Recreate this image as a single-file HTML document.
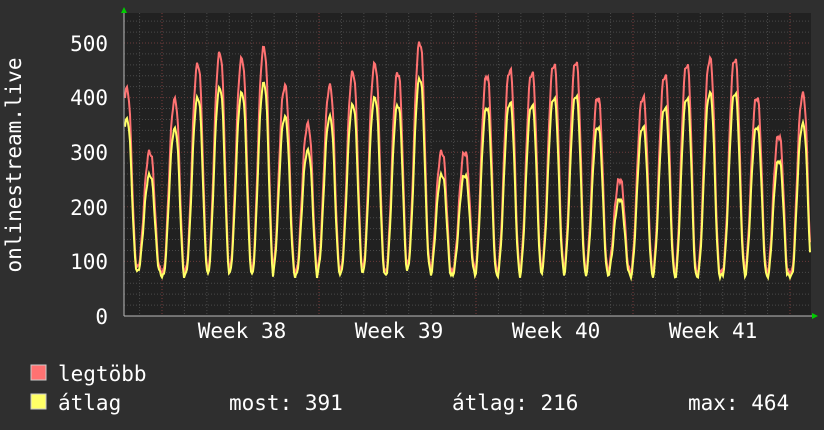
<!DOCTYPE html>
<html><head><meta charset="utf-8"><style>
html,body{margin:0;padding:0;background:#2f2f2f;width:824px;height:430px;overflow:hidden}
svg{display:block}
text{font-family:"DejaVu Sans Mono","Liberation Mono",monospace;fill:#fff;font-size:21px}
</style></head><body>
<svg id="g" width="824" height="430" xmlns="http://www.w3.org/2000/svg">
<rect width="824" height="430" fill="#2f2f2f"/>
<rect x="124" y="13" width="687" height="303" fill="#212121"/>
<g id="grid"></g>
<polyline id="red" fill="none" stroke="#ff7272" stroke-width="2"/>
<polyline id="yel" fill="none" stroke="#ffff66" stroke-width="2"/>
<line x1="124" y1="316" x2="814" y2="316" stroke="#bbb" stroke-width="1"/>
<line x1="124" y1="10" x2="124" y2="316" stroke="#bbb" stroke-width="1"/>
<polygon points="121,13 127,13 124,7" fill="#0c0"/>
<polygon points="812,313 812,319 818,316" fill="#0c0"/>
<text x="108" y="51" text-anchor="end">500</text>
<text x="108" y="105" text-anchor="end">400</text>
<text x="108" y="160" text-anchor="end">300</text>
<text x="108" y="215" text-anchor="end">200</text>
<text x="108" y="269" text-anchor="end">100</text>
<text x="108" y="324" text-anchor="end">0</text>
<text x="242" y="338" text-anchor="middle">Week 38</text>
<text x="399" y="338" text-anchor="middle">Week 39</text>
<text x="556" y="338" text-anchor="middle">Week 40</text>
<text x="713" y="338" text-anchor="middle">Week 41</text>
<text transform="translate(21,165) rotate(-90)" text-anchor="middle">onlinestream.live</text>
<rect x="31" y="365" width="15" height="15" fill="#ff7272" stroke="#ccc" stroke-width="1"/>
<rect x="31" y="394" width="15" height="15" fill="#ffff66" stroke="#ccc" stroke-width="1"/>
<text x="58" y="381">legtöbb</text>
<text x="58" y="410">átlag</text>
<text x="229" y="410">most: 391</text>
<text x="452" y="410">átlag: 216</text>
<text x="688" y="410">max: 464</text>
</svg>
<script>
var g=document.getElementById('grid'),s='';
function Y(v){return 316-v*0.546;}
for(var v=20;v<=540;v+=20){var y=Y(v);if(y<13)break;s+='<line x1="124" x2="811" y1="'+y+'" y2="'+y+'" stroke="'+(v%100==0?'#6a3a3a':'#4a4a4a')+'" stroke-dasharray="1,2"/>';}
var d=157/7;
for(var i=-7;i<40;i++){var x=162+i*d;if(x<125||x>811)continue;var maj=(i%7==0);s+='<line x1="'+x+'" x2="'+x+'" y1="13" y2="316" stroke="'+(maj?'#7a3a3a':'#4a4a4a')+'" stroke-dasharray="1,2"/>';}
g.innerHTML=s;
var peaks=[[127,415],[150,300],[175,395],[198,460],[220,480],[242,470],[264,490],[285,420],[308,350],[330,420],[353,445],[375,460],[398,445],[420,500],[442,300],[465,300],[487,440],[510,450],[532,445],[554,460],[576,465],[598,400],[620,250],[643,400],[665,440],[687,460],[710,470],[735,470],[757,400],[779,330],[803,405]];
var lows=[80,80,60,70,65,70,60,70,65,75,70,70,65,80,65,75,65,70,65,75,65,70,75,65,65,50,65,70,65,55,50];
function val(x,k){var best=0;for(var i=0;i<peaks.length;i++){var dx=x-peaks[i][0];var w=dx<0?5.8:4.6;var f=Math.exp(-Math.pow(Math.abs(dx)/w,2.6)/2);var base=lows[i];var v=base+(peaks[i][1]*k-base)*f;if(v>best)best=v;}return best;}
var r='',yl='';
for(var x=125;x<=810;x+=1){var j=Math.sin(x*1.7)*6;r+=x+','+Y(val(x,1)+j).toFixed(1)+' ';yl+=x+','+Y(val(x,0.88)-6+j*0.7).toFixed(1)+' ';}
document.getElementById('red').setAttribute('points',r);
document.getElementById('yel').setAttribute('points',yl);
</script>
</body></html>
